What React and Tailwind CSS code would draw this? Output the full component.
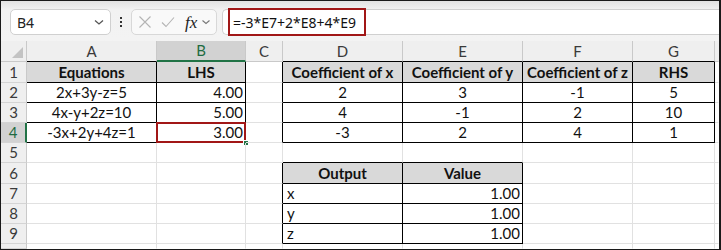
import React from "react";

const COLS = ["", "A", "B", "C", "D", "E", "F", "G", ""];

const CELL_FONT = { fontFamily: "Lato, 'Noto Sans', sans-serif" };

// data[row][col] = {t, a: 'c'|'r'|'l', h: header}
const data = {
  1: { 1: { t: "Equations", h: true }, 2: { t: "LHS", h: true }, 4: { t: "Coefficient of x", h: true }, 5: { t: "Coefficient of y", h: true }, 6: { t: "Coefficient of z", h: true }, 7: { t: "RHS", h: true } },
  2: { 1: { t: "2x+3y-z=5", a: "c" }, 2: { t: "4.00", a: "r" }, 4: { t: "2", a: "c" }, 5: { t: "3", a: "c" }, 6: { t: "-1", a: "c" }, 7: { t: "5", a: "c" } },
  3: { 1: { t: "4x-y+2z=10", a: "c" }, 2: { t: "5.00", a: "r" }, 4: { t: "4", a: "c" }, 5: { t: "-1", a: "c" }, 6: { t: "2", a: "c" }, 7: { t: "10", a: "c" } },
  4: { 1: { t: "-3x+2y+4z=1", a: "c" }, 2: { t: "3.00", a: "r", sel: true }, 4: { t: "-3", a: "c" }, 5: { t: "2", a: "c" }, 6: { t: "4", a: "c" }, 7: { t: "1", a: "c" } },
  6: { 4: { t: "Output", h: true }, 5: { t: "Value", h: true } },
  7: { 4: { t: "x", a: "l" }, 5: { t: "1.00", a: "r" } },
  8: { 4: { t: "y", a: "l" }, 5: { t: "1.00", a: "r" } },
  9: { 4: { t: "z", a: "l" }, 5: { t: "1.00", a: "r" } },
};

function rightBlack(r, c) {
  if (r >= 1 && r <= 4 && [1, 2, 3, 4, 5, 6, 7].includes(c)) return true;
  if (r >= 6 && r <= 9 && [3, 4, 5].includes(c)) return true;
  return false;
}
function bottomBlack(r, c) {
  if (r >= 0 && r <= 4 && [1, 4, 5, 6, 7].includes(c)) return true;
  if (r >= 1 && r <= 4 && c === 2) return true;
  if (r >= 5 && r <= 9 && [4, 5].includes(c)) return true;
  return false;
}

function ColHeader({ c }) {
  if (c === 0) {
    return (
      <div className="bg-[#efefef] border-r border-b border-r-[#c9c9c9] border-b-[#c9c9c9] relative">
        <svg width="26" height="21" className="block">
          <polygon points="11,17 22,17 22,6" fill="#c3c3c3" />
        </svg>
      </div>
    );
  }
  const sel = c === 2;
  const br = c === 8 ? "border-r-transparent" : "border-r-[#c9c9c9]";
  const bb = sel
    ? "border-b-2 border-b-[#217346]"
    : bottomBlack(0, c)
    ? "border-b border-b-black"
    : "border-b border-b-[#c9c9c9]";
  return (
    <div
      className={`border-r ${br} ${bb} ${sel ? "bg-[#d2d2d2] text-[#1e6b41]" : "bg-[#efefef] text-[#3a3a3a]"} flex items-center justify-center text-[15px]`}
      style={CELL_FONT}
    >
      {COLS[c]}
    </div>
  );
}

function RowHeader({ r }) {
  const sel = r === 4;
  return (
    <div
      className={`${sel ? "bg-[#d2d2d2] text-[#1e6b41] border-r-2 border-r-[#217346]" : "bg-[#efefef] text-[#3a3a3a] border-r border-r-[#c9c9c9]"} border-b border-b-[#d4d4d4] flex items-center justify-center text-[15px]`}
      style={CELL_FONT}
    >
      {r <= 9 ? r : ""}
    </div>
  );
}

function Cell({ r, c }) {
  const d = (data[r] && data[r][c]) || null;
  const br = c === 8 ? "border-r-transparent" : rightBlack(r, c) ? "border-r-black" : "border-r-[#e1e1e1]";
  const bb = r === 10 ? "border-b-transparent" : bottomBlack(r, c) ? "border-b-black" : "border-b-[#e1e1e1]";
  let inner = null;
  let cls = "";
  if (d) {
    if (d.h) {
      cls = "bg-[#d9d9d9] font-bold justify-center text-[#111]";
    } else if (d.a === "c") {
      cls = "justify-center text-[#111]";
    } else if (d.a === "r") {
      cls = "justify-end pr-[2px] text-[#111]";
    } else {
      cls = "justify-start pl-[4px] text-[#111]";
    }
    inner = d.t;
  }
  return (
    <div
      className={`relative border-r border-b ${br} ${bb} flex items-end pb-[0px] text-[15px] leading-[19px] whitespace-nowrap ${cls}`}
      style={CELL_FONT}
    >
      {inner}
      {d && d.sel && (
        <>
          <div className="absolute left-[-1px] top-[-1px] right-[-1px] bottom-[-1px] border-2 border-[#a11717] pointer-events-none" />
          <div className="absolute right-[-4px] bottom-[-4px] w-[6px] h-[6px] bg-[#217346] border border-white" />
        </>
      )}
    </div>
  );
}

function Toolbar() {
  return (
    <div
      className="h-[40px] flex items-start pt-[8px] bg-[linear-gradient(to_bottom,#e2e2e2,#f2f2f2_9px,#f3f3f3)]"
      style={{ fontFamily: "'Noto Sans', 'Open Sans', sans-serif" }}
    >
      <div className="ml-[9px] w-[101px] h-[26px] bg-white border border-[#d0d0d0] rounded-[5px] flex items-center justify-between pl-[6px] pr-[5px] shrink-0">
        <span className="text-[14px] text-[#222]">B4</span>
        <svg width="12" height="12" viewBox="0 0 12 12">
          <path d="M2 4.5 L6 8 L10 4.5" fill="none" stroke="#555" strokeWidth="1.3" />
        </svg>
      </div>
      <div className="w-[20px] h-[26px] flex flex-col items-center justify-center gap-[2px] shrink-0">
        <div className="w-[2px] h-[2px] bg-[#333]" />
        <div className="w-[2px] h-[2px] bg-[#333]" />
        <div className="w-[2px] h-[2px] bg-[#333]" />
      </div>
      <div className="w-[86px] h-[26px] bg-[#f9f9f9] border border-[#d8d8d8] rounded-[5px] flex items-center pl-[6px] shrink-0">
        <svg width="14" height="14" viewBox="0 0 14 14">
          <path d="M1.5 1.5 L12.5 12.5 M12.5 1.5 L1.5 12.5" stroke="#b4b4b4" strokeWidth="1.1" fill="none" />
        </svg>
        <svg width="14" height="14" viewBox="0 0 14 14" className="ml-[9px]">
          <path d="M1 7.5 L5 11.5 L13 2.5" stroke="#b4b4b4" strokeWidth="1.1" fill="none" />
        </svg>
        <span
          className="ml-[10px] text-[17px] italic text-[#222] leading-none"
          style={{ fontFamily: "'Liberation Serif', serif" }}
        >
          fx
        </span>
        <svg width="10" height="10" viewBox="0 0 10 10" className="ml-[4px]">
          <path d="M1.5 3.5 L5 6.5 L8.5 3.5" fill="none" stroke="#777" strokeWidth="1.1" />
        </svg>
      </div>
      <div className="ml-[5px] flex-1 h-[26px] bg-white border-y border-l border-[#d0d0d0] rounded-l-[5px] flex items-center">
        <div className="ml-[5px] w-[138px] h-[28px] shrink-0 border-2 border-[#a11717] flex items-center pl-[3px] text-[14px] text-[#111] whitespace-nowrap">
          =-3*E7+2*E8+4*E9
        </div>
      </div>
    </div>
  );
}

export default function App() {
  const rows = [];
  for (let r = 0; r <= 10; r++) {
    for (let c = 0; c <= 8; c++) {
      const key = `${r}-${c}`;
      if (r === 0) rows.push(<ColHeader key={key} c={c} />);
      else if (c === 0) rows.push(<RowHeader key={key} r={r} />);
      else rows.push(<Cell key={key} r={r} c={c} />);
    }
  }
  return (
    <div className="w-[721px] h-[250px] bg-white border-t border-l border-b border-r-2 border-[#1a1a1a] overflow-hidden flex flex-col">
      <Toolbar />
      <div className="grid flex-1 grid-cols-[26px_130px_89px_37px_120px_120px_110px_82px_1fr] grid-rows-[21px_21px_20px_20px_20px_20px_21px_20px_20px_20px_1fr]">
        {rows}
      </div>
    </div>
  );
}
